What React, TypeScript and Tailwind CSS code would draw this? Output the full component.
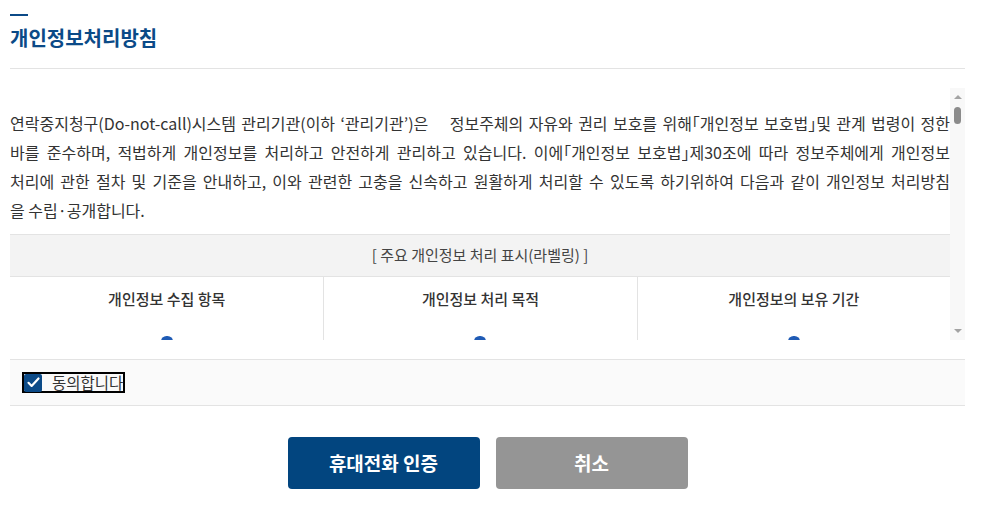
const columns = ["개인정보 수집 항목", "개인정보 처리 목적", "개인정보의 보유 기간"];

// 「 」 in the CJK font sit in a full em box; clip the empty half
const Open = () => (
  <span className="inline-block w-[8px] overflow-hidden align-top">
    <span className="inline-block -ml-[8px]">「</span>
  </span>
);
const Close = () => (
  <span className="inline-block w-[8px] overflow-hidden align-top">
    <span className="inline-block">」</span>
  </span>
);

const App = () => {
  return (
    <div className="w-[983px] h-[505px] bg-white overflow-hidden font-['Noto_Sans_CJK_KR','Noto_Sans',sans-serif]">
      <div className="ml-[10px] w-[955px] pt-[14px]">
        <div className="w-[18px] h-[2px] bg-[#0b4a87]" />
        <h2 className="mt-[8px] pb-[16px] text-[20px] leading-[28px] font-bold text-[#0b4a87] border-b border-[#e3e3e3]">
          개인정보처리방침
        </h2>

        {/* scroll box */}
        <div className="mt-[19px] flex h-[252px]">
          <div className="w-[940px] overflow-hidden pt-[21px]">
            <div className="text-[16px] leading-[29px] text-[#333]">
              <p className="whitespace-nowrap [text-align-last:justify]">
                연락중지청구(Do-not-call)시스템 관리기관(이하 ‘관리기관’)은 {"\u00a0\u00a0"} 정보주체의 자유와 권리 보호를 위해<Open />개인정보 보호법<Close />및 관계 법령이 정한
              </p>
              <p className="whitespace-nowrap [text-align-last:justify]">
                바를 준수하며, 적법하게 개인정보를 처리하고 안전하게 관리하고 있습니다. 이에<Open />개인정보 보호법<Close />제30조에 따라 정보주체에게 개인정보
              </p>
              <p className="whitespace-nowrap [text-align-last:justify]">
                처리에 관한 절차 및 기준을 안내하고, 이와 관련한 고충을 신속하고 원활하게 처리할 수 있도록 하기위하여 다음과 같이 개인정보 처리방침
              </p>
              <p>을 수립·공개합니다.</p>
            </div>

            <div className="mt-[9px]">
              <div className="h-[43px] flex items-center justify-center bg-[#f3f3f3] border-y border-[#e3e3e3] text-[15px] text-[#444]">
                [ 주요 개인정보 처리 표시(라벨링) ]
              </div>
              <div className="grid grid-cols-3">
                {columns.map((col, i) => (
                  <div
                    key={col}
                    className={`h-[70px] flex flex-col items-center pt-[11px] ${i > 0 ? "border-l border-[#e3e3e3]" : ""}`}
                  >
                    <p className="text-[15px] leading-[22px] font-medium text-[#333]">{col}</p>
                    <div className="mt-[26px] w-[12px] h-[12px] rounded-full bg-[#1f5bb5]" />
                  </div>
                ))}
              </div>
            </div>
          </div>

          {/* scrollbar */}
          <div className="w-[15px] h-full bg-[#f8f8f8] flex flex-col items-center">
            <div className="mt-[7px] w-0 h-0 border-x-[4px] border-x-transparent border-b-[4px] border-b-[#a3a3a3]" />
            <div className="mt-[8px] w-[7px] h-[17px] rounded-full bg-[#8b8b8b]" />
            <div className="mt-auto mb-[7px] w-0 h-0 border-x-[4px] border-x-transparent border-t-[4px] border-t-[#a3a3a3]" />
          </div>
        </div>

        {/* agree */}
        <div className="mt-[19px] h-[47px] flex items-center pl-[12px] bg-[#fafafa] border-y border-[#e3e3e3]">
          <label className="h-[21px] flex items-center border-2 border-black">
            <span className="w-[18px] h-[18px] rounded-[2px] bg-[#0b4a87] flex items-center justify-center">
              <svg width="15" height="15" viewBox="0 0 24 24" fill="none" stroke="white" strokeWidth="3.5" strokeLinecap="round" strokeLinejoin="round">
                <path d="M4 12.5l5 5L20 5.5" />
              </svg>
            </span>
            <span className="ml-[10px] text-[15.5px] leading-[17px] text-[#333]">동의합니다</span>
          </label>
        </div>

        <div className="mt-[31px] flex justify-center gap-[16px]">
          <button className="w-[192px] h-[52px] rounded-[4px] bg-[#02457f] text-white text-[19px] font-bold">
            휴대전화 인증
          </button>
          <button className="w-[192px] h-[52px] rounded-[4px] bg-[#959595] text-white text-[19px] font-bold">
            취소
          </button>
        </div>
      </div>
    </div>
  );
};

export default App;
